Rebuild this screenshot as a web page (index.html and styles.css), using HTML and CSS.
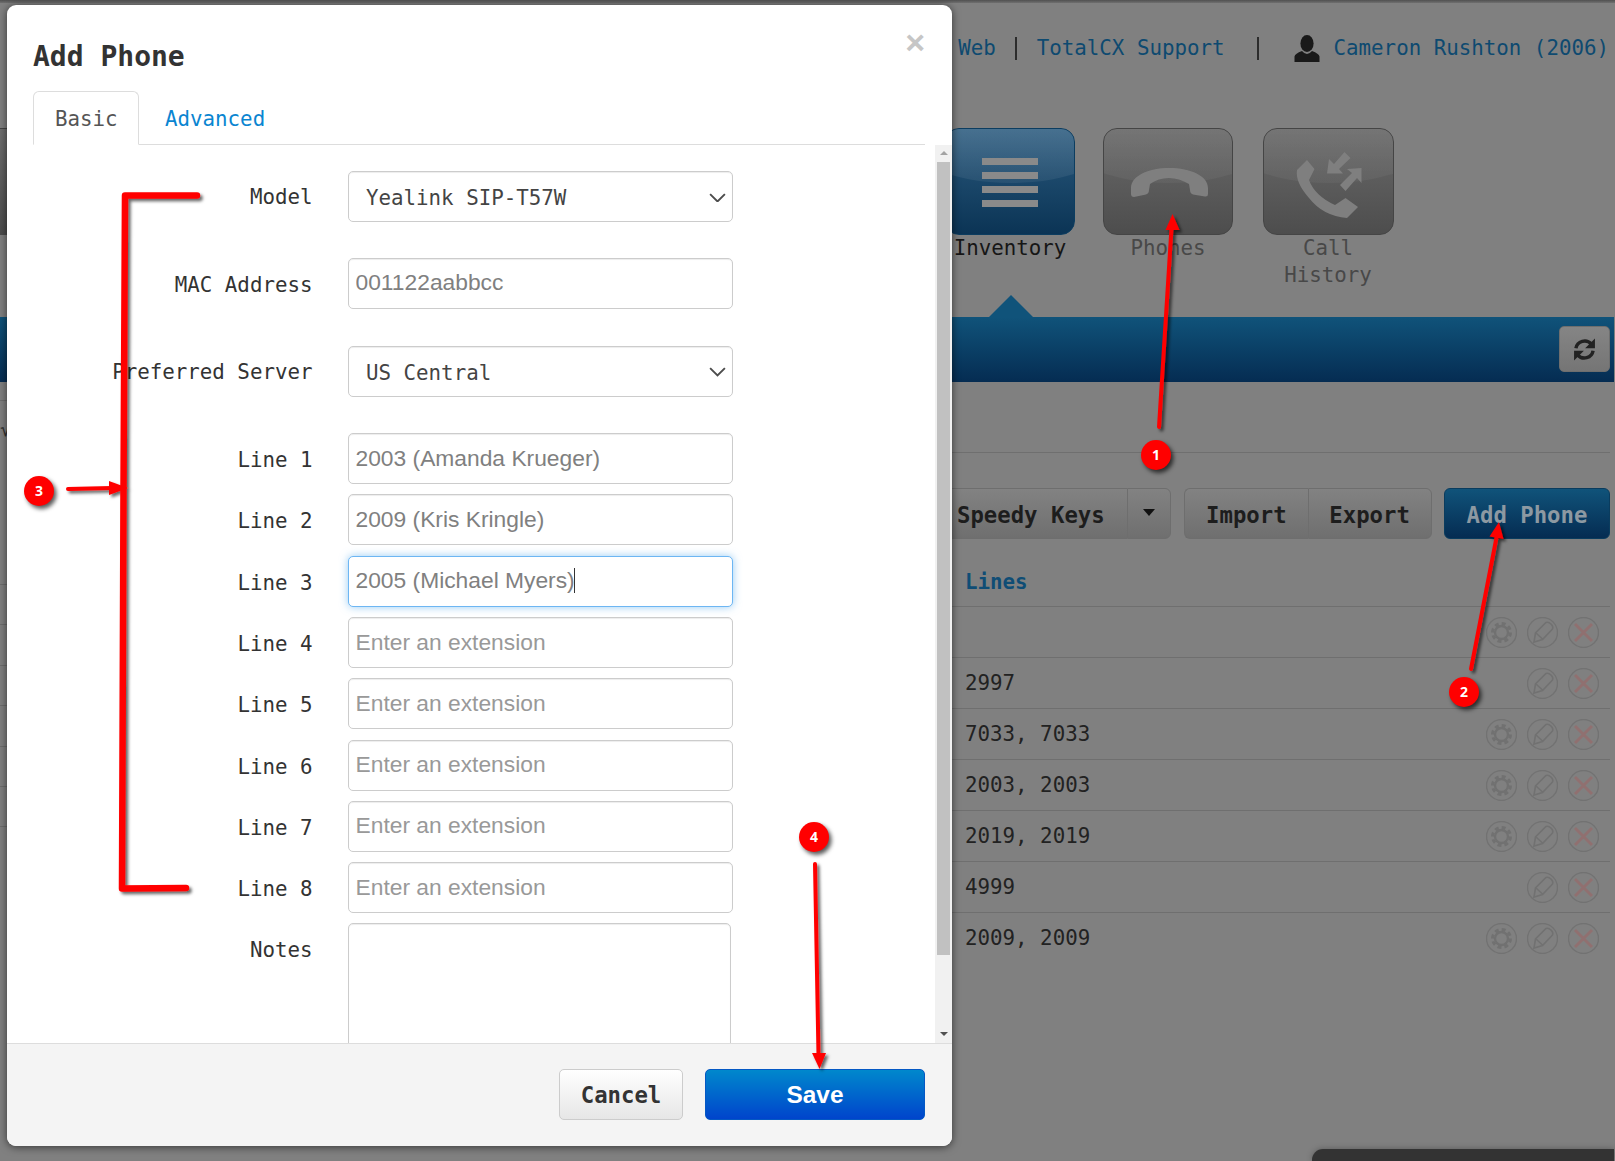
FILE: index.html
```html
<!DOCTYPE html>
<html lang="en">
<head>
<meta charset="utf-8">
<title>Add Phone</title>
<link rel="stylesheet" href="styles.css">
</head>
<body>
<svg class="defs" width="0" height="0" aria-hidden="true">
  <symbol id="gear" viewBox="0 0 31 31">
    <circle class="ic-ring" cx="15.5" cy="15.5" r="15"/>
    <circle class="ic-line ic-bold" cx="15.5" cy="15.5" r="6.5"/>
    <circle class="ic-teeth" cx="15.5" cy="15.5" r="9"/>
  </symbol>
  <symbol id="pencil" viewBox="0 0 31 31">
    <circle class="ic-ring" cx="15.5" cy="15.5" r="15"/>
    <path class="ic-line" d="M7 25 L8.5 16 L19 5.5 Q21.5 4.5 24.5 7.5 Q26.5 10 25.5 12 L15.5 22.5 Z M9 16 L15.5 22"/>
  </symbol>
  <symbol id="cross" viewBox="0 0 31 31">
    <circle class="ic-ring" cx="15.5" cy="15.5" r="15"/>
    <path class="ic-x" d="M7 7 L24 24 M24 7 L7 24"/>
  </symbol>
</svg>

<div class="page">
  <div class="topbar"></div>
  <header class="header">
    <a class="link">Web</a><span class="sep"></span><a class="link">TotalCX Support</a><span class="sep sep-wide"></span>
    <svg class="person" viewBox="0 0 26 27"><ellipse cx="13" cy="8.5" rx="6.6" ry="8.5"/><path d="M0.5 27 V21.5 Q1 18.5 8 16 Q13 22 18 16 Q25 18.5 25.5 21.5 V27 Z"/></svg>
    <a class="link">Cameron Rushton (2006)</a>
  </header>

  <nav class="nav">
    <div class="tile-stub"></div>
    <div class="nav-item nav-item-first">
      <div class="tile tile-active">
        <svg class="tile-icon" viewBox="0 0 130 107"><rect x="37" y="30" width="56" height="7"/><rect x="37" y="44" width="56" height="7"/><rect x="37" y="58" width="56" height="7"/><rect x="37" y="72" width="56" height="7"/></svg>
      </div>
      <div class="nav-label nav-label-active">Inventory</div>
    </div>
    <div class="nav-item">
      <div class="tile">
        <svg class="tile-icon" viewBox="0 0 130 107"><path d="M28 60 C28 48 45 40 66 40 C88 40 105 48 105 60 L105 66 Q105 69 102 68.5 L90 66.5 Q87 65.5 87 62 L86 56 Q76 50 66 50 Q55 50 47 56 L46 62 Q46 65.5 43 66.5 L31 69 Q28 69 28 66 Z"/></svg>
      </div>
      <div class="nav-label">Phones</div>
    </div>
    <div class="nav-item nav-item-wide">
      <div class="tile">
        <svg class="tile-icon" viewBox="0 0 130 107"><path d="M44 32 L51.5 41 L46 52 Q52 68 72 77 L82.5 70 L95 79 L84 90 Q60 88 46 70 Q32 54 34 42 Z"/><path d="M64 45.5 L66 31 L71 36 L81.5 24 L87.5 30 L76 41 L80 45.5 Z"/><path d="M98.5 40 L98.5 55 L94 50 L82.5 63 L77 57 L89 45 L84 41 Z"/></svg>
      </div>
      <div class="nav-label">Call History</div>
    </div>
  </nav>
  <div class="pointer"></div>
  <div class="bar">
    <button class="refresh" type="button" aria-label="Refresh">
      <svg viewBox="0 0 22 22"><path d="M4 10 A7.2 7.2 0 0 1 16.5 6.5"/><path d="M18 12 A7.2 7.2 0 0 1 5.5 15.5"/><polygon points="19.5,2 19.5,10 11.5,10"/><polygon points="2.5,20 2.5,12 10.5,12"/></svg>
    </button>
  </div>

  <div class="content">
    <aside class="side">
      <div class="side-rule"></div>
      <div class="side-glyph">√</div>
      <div class="side-rows">
        <div class="side-row"></div><div class="side-row"></div><div class="side-row"></div><div class="side-row"></div><div class="side-row"></div><div class="side-row"></div><div class="side-row"></div>
      </div>
    </aside>
    <main class="main">
      <div class="rule"></div>
      <div class="toolbar">
        <div class="btn-group btn-group-speedy">
          <button class="tbtn tbtn-speedy" type="button">Speedy Keys</button>
          <button class="tbtn tbtn-caret" type="button" aria-label="More"><span class="caret-down"></span></button>
        </div>
        <div class="btn-group btn-group-io">
          <button class="tbtn tbtn-io" type="button">Import</button>
          <button class="tbtn tbtn-io" type="button">Export</button>
        </div>
        <button class="tbtn tbtn-primary" type="button">Add Phone</button>
      </div>
      <div class="table-head">Lines</div>
      <div class="table">
        <div class="trow"><span class="cell"></span><svg class="ic"><use href="#gear"/></svg><svg class="ic"><use href="#pencil"/></svg><svg class="ic"><use href="#cross"/></svg></div>
        <div class="trow"><span class="cell">2997</span><svg class="ic"><use href="#pencil"/></svg><svg class="ic"><use href="#cross"/></svg></div>
        <div class="trow"><span class="cell">7033, 7033</span><svg class="ic"><use href="#gear"/></svg><svg class="ic"><use href="#pencil"/></svg><svg class="ic"><use href="#cross"/></svg></div>
        <div class="trow"><span class="cell">2003, 2003</span><svg class="ic"><use href="#gear"/></svg><svg class="ic"><use href="#pencil"/></svg><svg class="ic"><use href="#cross"/></svg></div>
        <div class="trow"><span class="cell">2019, 2019</span><svg class="ic"><use href="#gear"/></svg><svg class="ic"><use href="#pencil"/></svg><svg class="ic"><use href="#cross"/></svg></div>
        <div class="trow"><span class="cell">4999</span><svg class="ic"><use href="#pencil"/></svg><svg class="ic"><use href="#cross"/></svg></div>
        <div class="trow"><span class="cell">2009, 2009</span><svg class="ic"><use href="#gear"/></svg><svg class="ic"><use href="#pencil"/></svg><svg class="ic"><use href="#cross"/></svg></div>
      </div>
    </main>
  </div>
  <div class="dock"></div>
</div>

<section class="modal">
  <div class="modal-head">
    <h3 class="modal-title">Add Phone</h3>
    <button class="close" type="button" aria-label="Close">×</button>
    <div class="tabs">
      <a class="tab tab-active">Basic</a>
      <a class="tab">Advanced</a>
    </div>
  </div>
  <div class="modal-body">
    <form class="form">
      <div class="frow frow-wide">
        <label class="flabel flabel-sel">Model</label>
        <div class="select-wrap">
          <select class="fselect"><option>Yealink SIP-T57W</option></select>
          <svg class="chev" viewBox="0 0 16 9"><path d="M1 1 L8 8 L15 1"/></svg>
        </div>
      </div>
      <div class="frow frow-wide">
        <label class="flabel">MAC Address</label>
        <input class="finput" type="text" value="001122aabbcc">
      </div>
      <div class="frow frow-wide">
        <label class="flabel flabel-sel">Preferred Server</label>
        <div class="select-wrap">
          <select class="fselect"><option>US Central</option></select>
          <svg class="chev" viewBox="0 0 16 9"><path d="M1 1 L8 8 L15 1"/></svg>
        </div>
      </div>
      <div class="frow"><label class="flabel">Line 1</label><input class="finput" type="text" value="2003 (Amanda Krueger)"></div>
      <div class="frow"><label class="flabel">Line 2</label><input class="finput" type="text" value="2009 (Kris Kringle)"></div>
      <div class="frow"><label class="flabel">Line 3</label><div class="focus-wrap"><input class="finput finput-focus" type="text" value="2005 (Michael Myers)"><span class="text-caret"></span></div></div>
      <div class="frow"><label class="flabel">Line 4</label><input class="finput" type="text" placeholder="Enter an extension"></div>
      <div class="frow"><label class="flabel">Line 5</label><input class="finput" type="text" placeholder="Enter an extension"></div>
      <div class="frow"><label class="flabel">Line 6</label><input class="finput" type="text" placeholder="Enter an extension"></div>
      <div class="frow"><label class="flabel">Line 7</label><input class="finput" type="text" placeholder="Enter an extension"></div>
      <div class="frow"><label class="flabel">Line 8</label><input class="finput" type="text" placeholder="Enter an extension"></div>
      <div class="frow frow-notes"><label class="flabel">Notes</label><textarea class="fnotes"></textarea></div>
    </form>
    <div class="scrollbar">
      <span class="sb-arrow sb-up"></span>
      <div class="sb-thumb"></div>
      <span class="sb-arrow sb-down"></span>
    </div>
  </div>
  <div class="modal-foot">
    <button class="btn-cancel" type="button">Cancel</button>
    <button class="btn-save" type="button">Save</button>
  </div>
</section>

<svg class="marks" viewBox="0 0 1615 1161" aria-hidden="true">
  <defs>
    <filter id="sh" x="-20%" y="-20%" width="140%" height="140%"><feDropShadow dx="2.5" dy="2.5" stdDeviation="1.6" flood-color="#000" flood-opacity="0.6"/></filter>
  </defs>
  <g class="mark" filter="url(#sh)">
    <path class="m-arrow" d="M1159 427 L1171.5 228"/><polygon points="1172.5,214 1165.5,230 1179.5,230"/>
    <path class="m-arrow" d="M1471 669 L1497 535"/><polygon points="1499,522 1489.5,536.5 1503.5,539"/>
    <path class="m-bracket" d="M197 195.5 L125 195.5 L123.5 489 L122 888.5 L186 888"/>
    <path class="m-arrow" d="M68 489 L112 488"/><polygon points="109,481 109,495 128,488"/>
    <path class="m-arrow" d="M815 864 L818.5 1055"/><polygon points="812,1053 826,1053 819.5,1069"/>
  </g>
</svg>
<span class="badge badge-1">1</span>
<span class="badge badge-2">2</span>
<span class="badge badge-3">3</span>
<span class="badge badge-4">4</span>
</body>
</html>
```

FILE: styles.css
```css
* { box-sizing: border-box; }
html, body { margin: 0; padding: 0; }
body {
  width: 1615px;
  height: 1161px;
  overflow: hidden;
  position: relative;
  background: #808080;
  font-family: "DejaVu Sans Mono", monospace;
  font-size: 20.8px;
  color: #222;
}
.defs { position: absolute; }
button { font-family: inherit; }

/* background page */
.page { width: 1615px; height: 1161px; display: flex; flex-direction: column; }
.topbar { height: 3px; background: linear-gradient(#505050, #707070); }
.header { height: 125px; padding: 0 6px 35px 0; display: flex; align-items: center; justify-content: flex-end; }
.link { color: #0e4a70; line-height: 24px; white-space: nowrap; }
.sep { width: 2px; height: 23px; background: #2c2c2c; margin: 0 19.5px; }
.sep-wide { margin: 0 35px 0 32px; }
.person { width: 26px; height: 27px; margin-right: 14px; fill: #191919; }

.nav { height: 167px; display: flex; align-items: flex-start; }
.tile-stub { width: 7px; height: 107px; margin-right: 938px; background: linear-gradient(#6e6e6e, #4c4c4c); border-top: 1px solid #444; }
.nav-item { width: 130px; margin-right: 29.5px; }
.nav-item-first { margin-right: 28px; }
.nav-item-wide { width: 131px; margin-right: 0; }
.tile {
  position: relative;
  overflow: hidden;
  height: 107px;
  border: 1px solid #454545;
  border-radius: 14px;
  background: linear-gradient(#6a6a6a, #4d4d4d);
}
.tile::before {
  content: "";
  position: absolute;
  left: -45px;
  top: -46px;
  width: 220px;
  height: 100px;
  border-radius: 50%;
  background: linear-gradient(rgba(255,255,255,.1), rgba(255,255,255,.04));
}
.tile-active { border-color: #0c3d60; background: linear-gradient(#2a5a7e, #0b3455); }
.tile-active::before { background: linear-gradient(rgba(255,255,255,.2), rgba(255,255,255,.06)); }
.tile-icon { position: absolute; left: -1px; top: -1px; width: 130px; height: 107px; fill: #7f7f7f; }
.tile-active .tile-icon { fill: #8a8a8a; }
.nav-label { text-align: center; line-height: 27px; color: #484848; }
.nav-label-active { color: #161616; }

.pointer {
  width: 44px;
  height: 22px;
  margin-left: 989px;
  border-left: 22px solid transparent;
  border-right: 22px solid transparent;
  border-bottom: 22px solid #10537a;
}
.bar {
  height: 65px;
  margin-right: 1px;
  padding: 9px 4px 0 0;
  display: flex;
  justify-content: flex-end;
  align-items: flex-start;
  background: linear-gradient(#10537a, #052c52);
}
.refresh {
  width: 51px;
  height: 46px;
  border: 1px solid #6e6e6e;
  border-radius: 5px;
  background: linear-gradient(#858585, #757575);
  padding: 1px 0 0;
  display: flex;
  align-items: center;
  justify-content: center;
}
.refresh svg { width: 27px; height: 27px; fill: #222; }
.refresh path { fill: none; stroke: #222; stroke-width: 2.8; }

.content { display: flex; flex: 1; }
.side { width: 7px; margin-right: 938px; overflow: hidden; }
.side-rule { height: 1px; margin-top: 18px; background: #6e6e6e; }
.side-glyph { height: 183px; line-height: 56px; color: #333; font-size: 20px; text-align: right; white-space: nowrap; }
.side-row { height: 40.4px; border-top: 1px solid #6e6e6e; }
.main { width: 665px; }
.rule { height: 1px; margin-top: 70px; background: #6f6f6f; }
.toolbar { height: 51px; margin-top: 35px; display: flex; justify-content: flex-end; }
.btn-group { display: flex; }
.btn-group-speedy { margin-right: 13px; }
.btn-group-io { margin-right: 12.5px; }
.tbtn {
  height: 51px;
  padding: 3px 0 0;
  font-size: 22.3px;
  font-weight: 700;
  color: #1d1d1d;
  border: 1px solid #6e6e6e;
  background: linear-gradient(#828282, #6f6f6f);
}
.tbtn-speedy { width: 182px; border-right: 0; border-radius: 6px 0 0 6px; text-align: left; padding-left: 11px; }
.tbtn-caret { width: 44px; padding-top: 0; border-radius: 0 6px 6px 0; display: flex; align-items: center; justify-content: center; }
.caret-down { width: 0; height: 0; border-left: 6.5px solid transparent; border-right: 6.5px solid transparent; border-top: 7px solid #111; margin-bottom: 2px; }
.tbtn-io { width: 123.75px; }
.tbtn-io:first-child { border-radius: 6px 0 0 6px; border-right: 0; }
.tbtn-io:last-child { border-radius: 0 6px 6px 0; }
.tbtn-primary { width: 166px; border: 1px solid #0a3c5e; border-radius: 6px; color: #8d99a2; background: linear-gradient(#10537a, #052c52); }
.table-head { height: 67px; padding: 26px 0 0 20px; line-height: 34px; font-weight: 700; color: #0f4d75; }
.trow {
  height: 51px;
  display: flex;
  align-items: center;
  justify-content: flex-end;
  gap: 10px;
  padding: 0 11.5px 0 20px;
  border-top: 1px solid #6f6f6f;
}
.trow:first-child .cell { height: 24px; }
.cell { flex: 1; color: #222; }
.ic { width: 31px; height: 31px; }
.ic-ring { fill: none; stroke: #727272; stroke-width: 1.4; }
.ic-line { fill: none; stroke: #717171; stroke-width: 1.6; }
.ic-bold { stroke-width: 2.4; }
.ic-teeth { fill: none; stroke: #717171; stroke-width: 3; stroke-dasharray: 4 3.05; }
.ic-x { fill: none; stroke: #907070; stroke-width: 3; }
.dock { position: absolute; left: 1312px; top: 1149px; width: 302px; height: 12px; background: #333; border-radius: 11px 0 0 0; box-shadow: 0 0 6px rgba(0,0,0,.3); }

/* modal */
.modal {
  position: absolute;
  left: 7px;
  top: 5px;
  width: 945px;
  height: 1141px;
  display: flex;
  flex-direction: column;
  overflow: hidden;
  background: #fff;
  border-radius: 9px;
  box-shadow: 0 1px 9px rgba(0,0,0,.6);
}
.modal-head { position: relative; padding: 32px 27px 0 26px; }
.modal-title { margin: 0 0 14px; font-size: 28px; font-weight: 700; line-height: 40px; color: #333; }
.close {
  position: absolute;
  right: 27px;
  top: 15px;
  padding: 0;
  border: 0;
  background: none;
  font-family: "Liberation Sans", sans-serif;
  font-size: 34px;
  line-height: 44px;
  font-weight: 700;
  color: #c6c6c6;
}
.tabs { display: flex; height: 54px; border-bottom: 1px solid #ddd; }
.tab { height: 54px; padding: 0 21px; margin-right: 4px; line-height: 54px; color: #0a85d1; border: 1px solid transparent; }
.tab-active { width: 106px; padding: 0 21px; color: #555; background: #fff; border-color: #ddd #ddd #fff; border-radius: 6px 6px 0 0; margin-right: 4px; }

.modal-body { height: 898px; display: flex; overflow: hidden; }
.form { flex: 1; padding: 26.3px 0 0 26px; }
.frow { display: flex; align-items: flex-start; margin-bottom: 10.3px; }
.frow-wide { margin-bottom: 36.3px; }
.frow-wide:first-child { margin-bottom: 35.5px; }
.frow-wide:nth-child(2) { margin-bottom: 37.1px; }
.frow-notes { margin-top: -0.7px; }
.flabel { width: 279.5px; margin-right: 35.5px; height: 51px; line-height: 54px; text-align: right; color: #333; white-space: nowrap; }
.flabel-sel { line-height: 53px; }
.finput, .fselect, .fnotes {
  width: 385px;
  height: 51px;
  background: #fff;
  border: 1px solid #ccc;
  border-radius: 5px;
  box-shadow: inset 0 1px 1px rgba(0,0,0,.075);
  outline: none;
}
.finput {
  display: block;
  padding: 0 7px 1px 6.5px;
  font-family: "Liberation Sans", Arial, sans-serif;
  font-size: 22.8px;
  color: #808080;
}
.finput::placeholder { color: #999; opacity: 1; }
.finput-focus { border-color: #6db6f3; box-shadow: 0 0 9px rgba(82,168,236,.6); }
.focus-wrap { position: relative; }
.text-caret { position: absolute; left: 225.5px; top: 12px; width: 1px; height: 25px; background: #333; }
.select-wrap { position: relative; }
.fselect {
  display: block;
  appearance: none;
  padding: 3px 0 0 17px;
  font-family: inherit;
  font-size: 20.8px;
  color: #444;
}
.chev { position: absolute; right: 7.5px; top: 21.5px; width: 17px; height: 9.5px; fill: none; stroke: #4c4c4c; stroke-width: 1.8; }
.fnotes { width: 383px; height: 150px; resize: none; }

.scrollbar { width: 17px; margin-right: 0; padding-left: 2px; position: relative; background: #f1f1f1; }
.sb-thumb { position: absolute; left: 2px; top: 17px; width: 13px; height: 793px; background: #c1c1c1; }
.sb-arrow { position: absolute; left: 4.5px; width: 0; height: 0; border-left: 4px solid transparent; border-right: 4px solid transparent; }
.sb-up { top: 6px; border-bottom: 4px solid #a3a3a3; }
.sb-down { bottom: 7px; border-top: 4px solid #505050; }

.modal-foot {
  flex: 1;
  display: flex;
  justify-content: flex-end;
  gap: 22px;
  padding: 25px 27px 26px 0;
  background: #f4f4f4;
  border-top: 1px solid #ddd;
}
.btn-cancel, .btn-save { height: 51px; border-radius: 5px; padding: 0; font-size: 22.3px; font-weight: 700; }
.btn-cancel { width: 124px; color: #333; border: 1px solid #ccc; background: linear-gradient(#fff, #e6e6e6); }
.btn-save {
  width: 220px;
  border: 1px solid #0458c4;
  color: #fff;
  font-family: "Liberation Sans", Arial, sans-serif;
  font-size: 24.4px;
  background: linear-gradient(#0088cc, #0044cc);
}

/* annotations */
.marks { position: absolute; left: 0; top: 0; width: 1615px; height: 1161px; pointer-events: none; }
.mark { fill: #f00; }
.m-arrow { fill: none; stroke: #f00; stroke-width: 4; stroke-linecap: round; }
.m-bracket { fill: none; stroke: #f00; stroke-width: 6.5; stroke-linecap: round; stroke-linejoin: round; }
.badge {
  position: absolute;
  width: 30px;
  height: 30px;
  border-radius: 50%;
  background: #f00;
  color: #fff;
  font-family: "Noto Sans", sans-serif;
  font-size: 14px;
  font-weight: 700;
  line-height: 29px;
  text-align: center;
  box-shadow: 2.5px 3px 4px rgba(0,0,0,.65);
}
.badge-1 { left: 1141px; top: 440px; }
.badge-2 { left: 1449px; top: 677px; }
.badge-3 { left: 24px; top: 476px; }
.badge-4 { left: 799px; top: 822px; }
```
